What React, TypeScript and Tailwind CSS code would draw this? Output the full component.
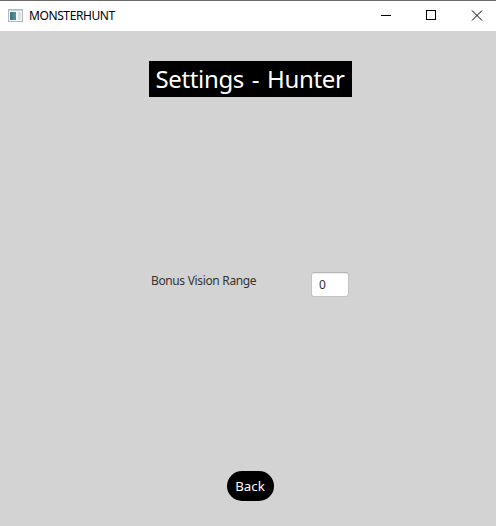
export default function App() {
  return (
    <div className="flex h-[526px] w-[496px] flex-col overflow-hidden border-t border-[#6b6b6b] bg-[#d3d3d3] font-['Noto_Sans',sans-serif]">
      <header className="flex h-[30px] shrink-0 items-center bg-white pl-2">
        <svg width="16" height="14" viewBox="0 0 16 14">
          <rect x="0.5" y="0.5" width="14" height="12" fill="#f4f6f8" stroke="#b4b8bf" />
          <path d="M1 1.5H14" stroke="#c9d2dc" />
          <rect x="2" y="3" width="6" height="8" fill="#4b9488" />
          <rect x="2" y="3" width="3" height="8" fill="#43798b" />
          <rect x="10" y="3" width="3" height="8" fill="#dfe2e5" />
        </svg>
        <span className="ml-[5px] grow text-[12px] tracking-[-0.4px] text-black">MONSTERHUNT</span>
        <svg width="110" height="12" viewBox="0 0 110 12" fill="none" stroke="#000" className="mr-[5px]">
          <path d="M0 5.5H10" />
          <rect x="45.5" y="0.5" width="9" height="9" />
          <path d="M91 0.5L101 10.5M101 0.5L91 10.5" />
        </svg>
      </header>
      <main className="flex grow flex-col items-center pl-1">
        <h1 className="mt-[30px] flex h-[36px] w-[203px] items-center justify-center bg-black text-[24px] font-normal tracking-[-0.35px] [word-spacing:2px] whitespace-nowrap text-white">Settings - Hunter</h1>
        <div className="mt-[175px] flex w-[198px] items-start justify-between">
          <label className="mt-[1px] text-[12px] leading-[16px] tracking-[-0.38px] [word-spacing:0.3px] text-[#333]">Bonus Vision Range</label>
          <div className="flex h-[25px] w-[38px] items-center rounded-[3px] border border-[#c4c4c4] border-t-[#b5b5b5] bg-white pl-[7px] text-[12px] text-[#333] shadow-[inset_0_1px_1px_#eee]">0</div>
        </div>
        <button className="mt-[174px] h-[30px] w-[47px] rounded-full bg-black pt-[2px] text-[13.3px] text-white">Back</button>
      </main>
    </div>
  );
}
